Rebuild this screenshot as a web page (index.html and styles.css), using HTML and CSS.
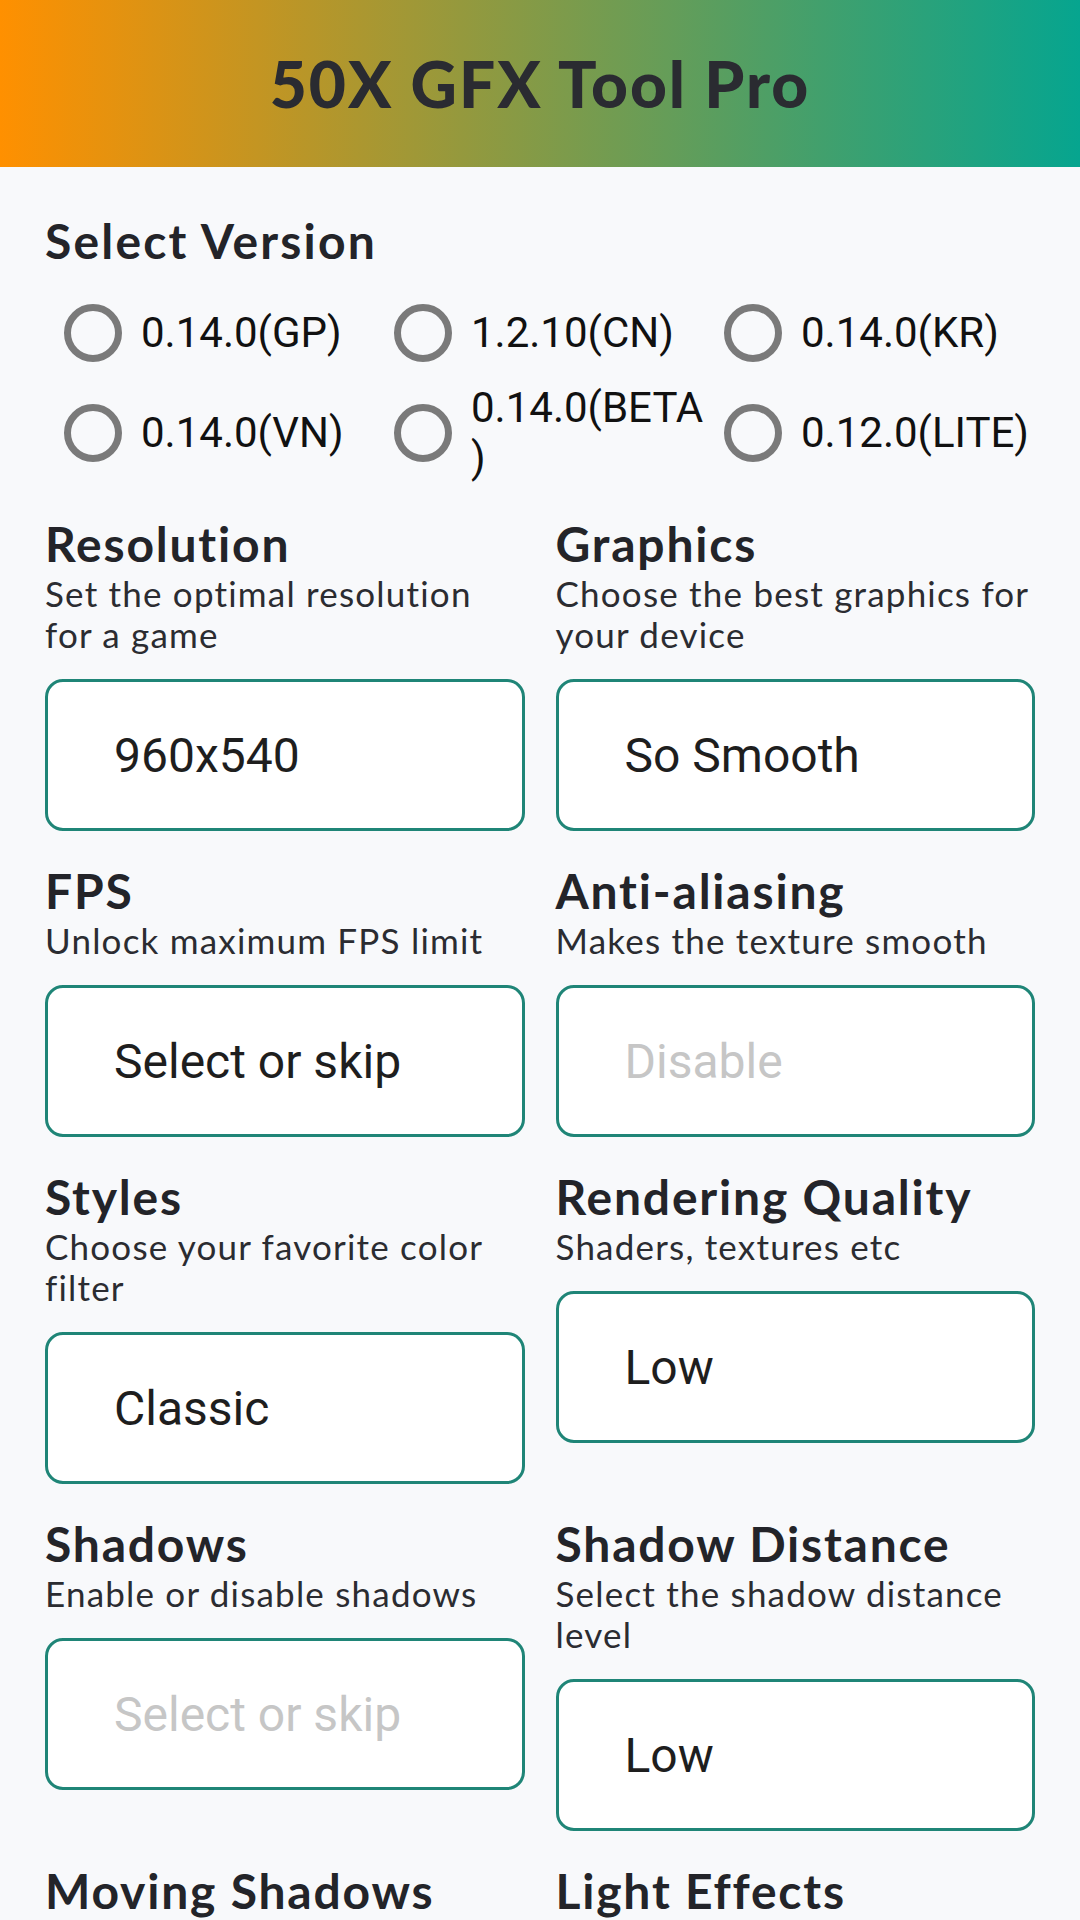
FILE: index.html
```html
<!DOCTYPE html>
<html lang="en">
<head>
    <meta charset="UTF-8">
    <meta name="viewport" content="width=device-width, initial-scale=1.0">
    <title>50X GFX Tool Pro</title>
    <link rel="stylesheet" href="styles.css">
</head>
<body>
    <header class="topbar">
        <h1 class="app-title">50X GFX Tool Pro</h1>
    </header>

    <main class="content">
        <h2 class="section-title">Select Version</h2>
        <div class="versions">
            <label class="radio"><input type="radio" name="version"><span>0.14.0(GP)</span></label>
            <label class="radio"><input type="radio" name="version"><span>1.2.10(CN)</span></label>
            <label class="radio"><input type="radio" name="version"><span>0.14.0(KR)</span></label>
            <label class="radio"><input type="radio" name="version"><span>0.14.0(VN)</span></label>
            <label class="radio"><input type="radio" name="version"><span>0.14.0(BETA<br>)</span></label>
            <label class="radio"><input type="radio" name="version"><span>0.12.0(LITE)</span></label>
        </div>

        <div class="options">
            <div class="option">
                <h3 class="option-title">Resolution</h3>
                <p class="option-desc">Set the optimal resolution<br>for a game</p>
                <div class="select">960x540</div>
            </div>
            <div class="option">
                <h3 class="option-title">Graphics</h3>
                <p class="option-desc">Choose the best graphics for<br>your device</p>
                <div class="select">So Smooth</div>
            </div>

            <div class="option">
                <h3 class="option-title">FPS</h3>
                <p class="option-desc">Unlock maximum FPS limit</p>
                <div class="select">Select or skip</div>
            </div>
            <div class="option">
                <h3 class="option-title">Anti-aliasing</h3>
                <p class="option-desc">Makes the texture smooth</p>
                <div class="select empty">Disable</div>
            </div>

            <div class="option">
                <h3 class="option-title">Styles</h3>
                <p class="option-desc">Choose your favorite color<br>filter</p>
                <div class="select">Classic</div>
            </div>
            <div class="option">
                <h3 class="option-title">Rendering Quality</h3>
                <p class="option-desc">Shaders, textures etc</p>
                <div class="select">Low</div>
            </div>

            <div class="option">
                <h3 class="option-title">Shadows</h3>
                <p class="option-desc">Enable or disable shadows</p>
                <div class="select empty">Select or skip</div>
            </div>
            <div class="option">
                <h3 class="option-title">Shadow Distance</h3>
                <p class="option-desc">Select the shadow distance<br>level</p>
                <div class="select">Low</div>
            </div>

            <div class="option">
                <h3 class="option-title">Moving Shadows</h3>
            </div>
            <div class="option">
                <h3 class="option-title">Light Effects</h3>
            </div>
        </div>
    </main>
</body>
</html>
```

FILE: styles.css
```css
body {
    margin: 0;
    background-color: #f8f9fb;
    font-family: Lato, 'Open Sans', sans-serif;
    color: #232429;
    overflow: hidden;
}

.topbar {
    height: 167px;
    display: flex;
    justify-content: center;
    align-items: center;
    background: linear-gradient(90deg, #ff9000, #06a58f);
}

.app-title {
    margin: 0;
    font-size: 64px;
    font-weight: 900;
    color: #2a2b31;
    letter-spacing: 2px;
}

.content {
    padding: 0 45px;
}

.section-title {
    margin: 46px 0 0;
    font-size: 48px;
    line-height: 56px;
    font-weight: 700;
    letter-spacing: 2.2px;
}

.versions {
    display: grid;
    grid-template-columns: repeat(3, minmax(0, 1fr));
    grid-auto-rows: 100px;
    margin-top: 14px;
}

.radio {
    display: flex;
    align-items: center;
    padding-left: 19px;
    font-family: Roboto, sans-serif;
    font-size: 42px;
    line-height: 50px;
    color: #111;
}

.radio input {
    appearance: none;
    -webkit-appearance: none;
    flex-shrink: 0;
    width: 58px;
    height: 58px;
    margin: 0 19px 0 0;
    border: 7px solid #7a7a7a;
    border-radius: 50%;
    box-sizing: border-box;
}

.options {
    display: grid;
    grid-template-columns: minmax(0, 1fr) minmax(0, 1fr);
    column-gap: 31px;
    row-gap: 32px;
    margin-top: 33px;
}

.option-title {
    margin: 0;
    font-size: 48px;
    line-height: 56px;
    font-weight: 700;
    letter-spacing: 1.8px;
    white-space: nowrap;
}

.option-desc {
    margin: 1px 0 0;
    font-size: 35px;
    line-height: 41px;
    letter-spacing: 1.2px;
    color: #2b2c31;
    white-space: nowrap;
}

.select {
    margin-top: 24px;
    height: 152px;
    box-sizing: border-box;
    display: flex;
    align-items: center;
    padding-left: 66px;
    background-color: #fff;
    border: 3px solid #1f8577;
    border-radius: 18px;
    font-family: Roboto, sans-serif;
    font-size: 48px;
    color: #1e1e1e;
}

.select.empty {
    color: #c6c6c6;
}
```
